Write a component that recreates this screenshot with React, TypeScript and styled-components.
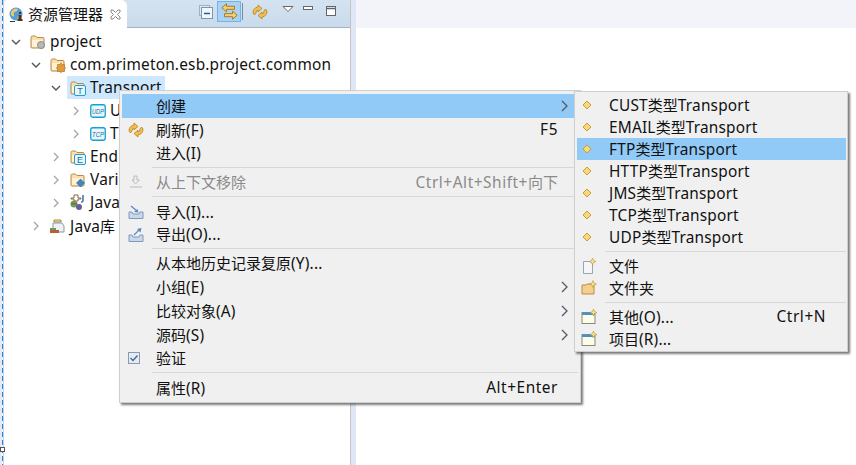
import React from "react";
import styled, { createGlobalStyle } from "styled-components";

const Global = createGlobalStyle`
  html, body { margin: 0; padding: 0; background: #fff; }
  body { font-family: "Noto Sans", "Noto Sans CJK SC", sans-serif; font-size: 15px; color: #111; overflow: hidden; }
`;

const Page = styled.div`
  position: relative; display: flex; width: 856px; height: 465px; overflow: hidden; background: #fff;
`;
const Rail = styled.div`
  position: relative; width: 4px; flex: none;
  background:
    linear-gradient(#e3e9f5, #e3e9f5) 0 0 / 2px 100% no-repeat,
    repeating-linear-gradient(#1b87e8 0 5px, #fff 5px 8px) 2px 0 / 1px 100% no-repeat,
    linear-gradient(#c9cfd8, #c9cfd8) 3px 0 / 1px 100% no-repeat;
`;
const Handle = styled.i`
  position: absolute; left: 0; top: 447px; width: 3px; height: 3px; border: 1px solid #555; background: #fff;
`;
const Panel = styled.section`
  width: 346px; flex: none; display: flex; flex-direction: column; border-right: 1px solid #c4c4c4;
`;
const TabBar = styled.header`
  height: 27px; flex: none; display: flex; align-items: flex-start;
  background: linear-gradient(#d5e3f0, #c8dbec); border-bottom: 1px solid #a9b3bf;
`;
const Tab = styled.div`
  width: 123px; height: 28px; flex: none; display: flex; align-items: center; padding-left: 5px; box-sizing: border-box;
  background: #fff; border-radius: 3px 6px 0 0; color: #111;
`;
const TabTitle = styled.span`margin-left: 3px; padding-bottom: 2px; width: 82px; flex: none;`;
const Tools = styled.div`
  margin-left: 72px; display: flex; align-items: flex-start; height: 27px;
`;
const ToolBtn = styled.div<{ $w: number; $h: number; $ml?: number; $mt: number; $active?: boolean }>`
  width: ${(p) => p.$w}px; height: ${(p) => p.$h}px; margin: ${(p) => p.$mt}px 0 0 ${(p) => p.$ml ?? 0}px;
  flex: none; display: flex; align-items: center; justify-content: center; box-sizing: border-box;
  ${(p) => p.$active && "background: #a9d2f5; border: 1px solid #74b3ea;"}
`;
const ToolSep = styled.div`width: 1px; height: 17px; margin: 3px 8px 0 1px; background: #7e8a96; flex: none;`;
const Tree = styled.ul`list-style: none; margin: 2px 0 0; padding: 0; display: flex; flex-direction: column;`;
const Row = styled.li<{ $level: number; $h?: number }>`
  height: ${(p) => p.$h ?? 23}px; display: flex; align-items: center; padding-left: ${(p) => 7 + p.$level * 20}px; white-space: nowrap;
`;
const Twist = styled.span`width: 10px; height: 10px; flex: none; margin-right: 6px; display: flex;`;
const Label = styled.span<{ $selected?: boolean }>`
  display: flex; align-items: center; height: 23px; padding: 0 3px; gap: 4px; color: #111;
  ${(p) => p.$selected && "background: #cde8ff;"}
`;
const LabelText = styled.span`padding-bottom: 1px;`;
const Latin = styled.span`font-size: 15.4px; letter-spacing: 0.2px;`;
const Sash = styled.div`width: 5px; flex: none; background: #dfe6f6;`;
const Editor = styled.main`flex: 1; display: flex; flex-direction: column;`;
const EditorTabs = styled.div`height: 28px; background: #f3f4fa;`;

const Menu = styled.div<{ $left: number; $top: number; $w: number; $h: number; $pt: number; $pr: number }>`
  position: absolute; left: ${(p) => p.$left}px; top: ${(p) => p.$top}px; width: ${(p) => p.$w}px; height: ${(p) => p.$h}px;
  box-sizing: border-box; background: #f0f0f0; border: 1px solid #cfcfcf;
  padding: ${(p) => p.$pt}px ${(p) => p.$pr}px 0 2px;
  box-shadow: 2px 2px 2px rgba(70,70,70,.7);
`;
const Item = styled.div<{ $h?: number; $hot?: boolean; $off?: boolean }>`
  height: ${(p) => p.$h ?? 22}px; display: flex; align-items: center; white-space: nowrap;
  color: ${(p) => (p.$off ? "#8a8a8a" : "#111")};
  ${(p) => p.$hot && "background: #91c9f7;"}
`;
const Slot = styled.span<{ $w: number }>`
  width: ${(p) => p.$w}px; flex: none; display: flex; align-items: center; padding-left: ${(p) => (p.$w > 33 ? 6 : 4)}px; box-sizing: border-box;
`;
const Text = styled.span`flex: 1; padding-bottom: 1px;`;
const Keys = styled.span`
  flex: none; padding-bottom: 1px;
  ${Latin} { letter-spacing: 0.55px; }
`;
const ArrowSlot = styled.span<{ $w: number }>`width: ${(p) => p.$w}px; flex: none; display: flex; padding-left: 3px; box-sizing: border-box;`;
const Sep = styled.div<{ $ml: number; $mr: number; $h?: number }>`
  height: ${(p) => p.$h ?? 7}px; display: flex; align-items: center; margin: 0 ${(p) => p.$mr}px 0 ${(p) => p.$ml}px;
  &::before { content: ""; flex: 1; height: 1px; background: #d7d7d7; }
`;

/* Latin runs sit slightly larger than the CJK runs, as in the source UI font. */
const Mixed = ({ t }: { t: string }) => (
  <>
    {t.split(/([\u0000-\u024f]+)/).filter(Boolean).map((part, i) =>
      /^[\u0000-\u024f]/.test(part) ? <Latin key={i}>{part}</Latin> : <span key={i}>{part}</span>
    )}
  </>
);

/* ---------- icons ---------- */
const Down = () => (
  <svg width="10" height="10" viewBox="0 0 10 10"><path d="M1 3l4 4 4-4" fill="none" stroke="#555" strokeWidth="1.4" /></svg>
);
const Right = () => (
  <svg width="10" height="10" viewBox="0 0 10 10"><path d="M3 1l4 4-4 4" fill="none" stroke="#a8a8a8" strokeWidth="1.4" /></svg>
);
const SubArrow = () => (
  <svg width="8" height="12" viewBox="0 0 8 12"><path d="M1 1l5 5-5 5" fill="none" stroke="#505a66" strokeWidth="1.3" /></svg>
);
const Folder = ({ children }: { children?: React.ReactNode }) => (
  <svg width="16" height="16" viewBox="0 0 16 16">
    <path d="M1 4.500V13q0 1 1 1h11q1 0 1-1V4.500q0-1-1-1H7L5.500 2H2.500Q1 2 1 3.500z" fill="#fbdfa6" stroke="#b38a4e" />
    <path d="M2 6h11v7H2z" fill="#fff2d2" />
    {children}
  </svg>
);
const Globe = () => (
  <svg width="16" height="17" viewBox="0 0 16 17">
    <circle cx="7" cy="8" r="6.500" fill="#4f9fdd" />
    <path d="M2 6q3-5 7-3-1 3-3 3t-1 3-3 0zM9 10q3-2 4-1-1 4-5 5z" fill="#f3c765" />
    <path d="M1 15h5v1H1zM10 6h2v2h-2zM9.500 9h3v4h1v2h-5v-2h1z" fill="#4e3318" />
  </svg>
);
const CloseX = () => (
  <svg width="11" height="11" viewBox="0 0 11 11">
    <path d="M1 1h2l2.500 2.500L8 1h2v2L7.500 5.500 10 8v2H8L5.500 7.500 3 10H1V8l2.500-2.500L1 3z" fill="#fff" stroke="#8a8a8a" />
  </svg>
);
const CollapseAll = () => (
  <svg width="14" height="14" viewBox="0 0 14 14">
    <rect x=".5" y=".5" width="10" height="10" fill="#dfe9f4" stroke="#9fb3c8" />
    <rect x="2.500" y="2.500" width="11" height="11" fill="#f3f7fb" stroke="#7d96ae" />
    <path d="M5 8.500h6" stroke="#1f5c9a" strokeWidth="1.500" />
  </svg>
);
const LinkArrows = () => (
  <svg width="17" height="17" viewBox="0 0 17 17">
    <path d="M.8 4.800L5.500.8v2.500h8v3h-8v2.500z" fill="#f6cf70" stroke="#a97a1f" />
    <path d="M16.200 12.200L11.500 8.200v2.500h-8v3h8v2.500z" fill="#f6cf70" stroke="#a97a1f" />
  </svg>
);
const Sync = ({ s = 16 }: { s?: number }) => (
  <svg width={s} height={s} viewBox="0 0 16 16">
    <path d="M1 9q0-5 5-6V1l4 3.500L6 8V6Q4 6 4 9l-1.500 2z" fill="#f4bf4f" stroke="#b5811f" strokeWidth=".8" />
    <path d="M15 7q0 5-5 6v2L6 11.500 10 8v2q2 0 2-3l1.500-2z" fill="#f4bf4f" stroke="#b5811f" strokeWidth=".8" />
  </svg>
);
const ViewMenu = () => (
  <svg width="12" height="6" viewBox="0 0 12 6"><path d="M1 .5h10L6 5.500z" fill="#fff" stroke="#6a6a6a" /></svg>
);
const Minimize = () => (
  <svg width="10" height="4" viewBox="0 0 10 4"><rect x=".5" y=".5" width="9" height="3" fill="#fff" stroke="#5f6870" /></svg>
);
const Maximize = () => (
  <svg width="10" height="10" viewBox="0 0 10 10">
    <rect x=".5" y=".5" width="9" height="9" fill="#fff" stroke="#5f6870" />
    <path d="M.5 2.500h9" stroke="#5f6870" strokeWidth="1.500" />
  </svg>
);
const Badge = ({ t }: { t: string }) => (
  <svg width="16" height="16" viewBox="0 0 16 16">
    <rect x=".75" y="1.750" width="14.500" height="12.500" rx="2" fill="#e8f6fd" stroke="#15a0d8" strokeWidth="1.300" />
    <text x="8" y="11" textAnchor="middle" fontFamily="Liberation Sans, sans-serif" fontSize="7.500" fill="#1d6f98" fontStyle="italic" textLength="12" lengthAdjust="spacingAndGlyphs">{t}</text>
  </svg>
);
const Letter = ({ t }: { t: string }) => (
  <>
    <rect x="4.500" y="5.500" width="11" height="10" rx="1.500" fill="#e7f6fc" stroke="#1aa0d5" />
    <text x="10" y="14" textAnchor="middle" fontFamily="Liberation Sans, sans-serif" fontSize="9" fill="#2a6c92">{t}</text>
  </>
);
const JavaIcon = () => (
  <svg width="16" height="17" viewBox="0 0 16 17">
    <path d="M4 1h4v3h3v1H8v2H4V5H1V4h3z" fill="none" stroke="#8a6a4a" />
    <path d="M13 1v6q0 1-2 1" fill="none" stroke="#3a6ea8" strokeWidth="1.500" />
    <circle cx="4" cy="10" r="3.500" fill="#5ba85b" />
    <rect x="1" y="9" width="6" height="1.500" fill="#c74a3a" />
    <circle cx="9" cy="13" r="3" fill="#6a5aa0" />
  </svg>
);
const LibIcon = () => (
  <svg width="16" height="16" viewBox="0 0 16 16">
    <path d="M4 2h7v2H4z" fill="#f7e5a8" stroke="#a98a40" />
    <path d="M3 5h9l2 3v6H3z" fill="#eef2f6" stroke="#8b98a6" />
    <path d="M0 12h9v3H0z" fill="#c25b34" />
    <path d="M0 10h6v2H0z" fill="#5aa35a" />
  </svg>
);
const Diamond = () => (
  <svg width="12" height="12" viewBox="0 0 12 12"><path d="M6 2L10 6 6 10 2 6z" fill="#fbd970" stroke="#c99a45" /></svg>
);
const Spark = ({ x, y }: { x: number; y: number }) => (
  <path transform={`translate(${x} ${y})`} d="M0-3.500L1-1 3.500 0 1 1 0 3.500-1 1-3.500 0-1-1z" fill="#fbe08a" stroke="#b79333" strokeWidth=".6" />
);
const NewFile = () => (
  <svg width="16" height="17" viewBox="0 0 16 17">
    <path d="M2.500 3.500h7l2 2v10h-9z" fill="#f4f6fa" stroke="#9aa6b4" />
    <Spark x={11.500} y={3.500} />
  </svg>
);
const NewFolder = () => (
  <svg width="16" height="16" viewBox="0 0 16 16">
    <path d="M1 5h4l1-1h7v10H1z" fill="#f5cf8c" stroke="#b68c4b" />
    <Spark x={12} y={4} />
  </svg>
);
const NewWin = () => (
  <svg width="16" height="16" viewBox="0 0 16 16">
    <rect x="1" y="3.500" width="13" height="11" fill="#fdfbe9" stroke="#8a8a70" />
    <rect x="1" y="3.500" width="13" height="2.500" fill="#4a8fd0" />
    <Spark x={12.500} y={3.500} />
  </svg>
);
const RemoveCtx = () => (
  <svg width="16" height="16" viewBox="0 0 16 16">
    <path d="M6 2h3v4h2.500L7.500 10 4 6h2z" fill="#eee" stroke="#bbb" />
    <path d="M2 13h12" stroke="#bbb" />
  </svg>
);
const ImportIc = () => (
  <svg width="16" height="16" viewBox="0 0 16 16">
    <path d="M1 8v6.500h14V8h-3l-1 2H5L4 8z" fill="#c9d9ea" stroke="#7e9abb" />
    <path d="M3 2l6 5" stroke="#5b8bc4" strokeWidth="1.300" /><path d="M10.500 8.500L6 8l3.500-3z" fill="#5b8bc4" />
  </svg>
);
const ExportIc = () => (
  <svg width="16" height="16" viewBox="0 0 16 16">
    <path d="M1 8v6.500h14V8h-3l-1 2H5L4 8z" fill="#c9d9ea" stroke="#7e9abb" />
    <path d="M6 8l6-6" stroke="#5b8bc4" strokeWidth="1.300" /><path d="M13.500 1L9 2l3.500 3.500z" fill="#5b8bc4" />
  </svg>
);
const Check = () => (
  <svg width="12" height="12" viewBox="0 0 12 12">
    <rect x=".5" y=".5" width="11" height="11" fill="#e3ebf5" stroke="#8a9bb0" />
    <path d="M2.500 6l2.500 2.500 4.500-5" fill="none" stroke="#4a6a8c" strokeWidth="1.400" />
  </svg>
);

type TreeNode = { level: number; open?: boolean; icon: React.ReactNode; text: string; selected?: boolean; h?: number };
const nodes: TreeNode[] = [
  { level: 0, open: true, text: "project", icon: <Folder><circle cx="11" cy="11" r="3.500" fill="#b9b9b9" stroke="#8c8c8c" /></Folder> },
  { level: 1, open: true, text: "com.primeton.esb.project.common", icon: <Folder><path d="M11 6l1.500 1.500 2 0 0 2 1 1.500-1 1.500 0 2-2 0-1.500 1-1.500-1-2 0 0-2-1-1.500 1-1.500 0-2 2 0z" fill="#e09a3a" stroke="#a86c1c" strokeWidth=".6" /></Folder> },
  { level: 2, open: true, text: "Transport", selected: true, icon: <Folder><Letter t="T" /></Folder> },
  { level: 3, text: "UDP", icon: <Badge t="UDP" /> },
  { level: 3, text: "TCP", icon: <Badge t="TCP" /> },
  { level: 2, text: "Endpoint", h: 24, icon: <Folder><Letter t="E" /></Folder> },
  { level: 2, text: "Variable", h: 22, icon: <Folder><path d="M10.500 7l4 4-4 4-4-4z" fill="#3f86c9" stroke="#2a5f96" strokeWidth=".6" /></Folder> },
  { level: 2, text: "Java", icon: <JavaIcon /> },
  { level: 1, text: "Java库", h: 24, icon: <LibIcon /> },
];

type MenuEntry =
  | { sep: true; h?: number }
  | { sep?: false; text: string; h?: number; icon?: React.ReactNode; keys?: string; sub?: boolean; hot?: boolean; off?: boolean };

const mainMenu: MenuEntry[] = [
  { text: "创建", h: 24, sub: true, hot: true },
  { text: "刷新(F)", h: 24, keys: "F5", icon: <Sync /> },
  { text: "进入(I)", h: 22 },
  { sep: true },
  { text: "从上下文移除", off: true, keys: "Ctrl+Alt+Shift+向下", icon: <RemoveCtx /> },
  { sep: true },
  { text: "导入(I)...", h: 24, icon: <ImportIc /> },
  { text: "导出(O)...", h: 21, icon: <ExportIc /> },
  { sep: true, h: 6 },
  { text: "从本地历史记录复原(Y)...", h: 24 },
  { text: "小组(E)", h: 24, sub: true },
  { text: "比较对象(A)", h: 24, sub: true },
  { text: "源码(S)", h: 24, sub: true },
  { text: "验证", h: 22, icon: <Check /> },
  { sep: true },
  { text: "属性(R)", h: 24, keys: "Alt+Enter" },
];

const subMenu: MenuEntry[] = [
  { text: "CUST类型Transport", icon: <Diamond /> },
  { text: "EMAIL类型Transport", icon: <Diamond /> },
  { text: "FTP类型Transport", icon: <Diamond />, hot: true },
  { text: "HTTP类型Transport", icon: <Diamond /> },
  { text: "JMS类型Transport", icon: <Diamond /> },
  { text: "TCP类型Transport", icon: <Diamond /> },
  { text: "UDP类型Transport", icon: <Diamond /> },
  { sep: true },
  { text: "文件", icon: <NewFile /> },
  { text: "文件夹", icon: <NewFolder /> },
  { sep: true },
  { text: "其他(O)...", keys: "Ctrl+N", icon: <NewWin /> },
  { text: "项目(R)...", icon: <NewWin /> },
];

const Entries = ({ items, slot, sepL, sepR, tail }: { items: MenuEntry[]; slot: number; sepL: number; sepR: number; tail: number }) => (
  <>
    {items.map((it, i) =>
      it.sep ? (
        <Sep key={i} $ml={sepL} $mr={sepR} $h={it.h} />
      ) : (
        <Item key={i} $h={it.h} $hot={it.hot} $off={it.off}>
          <Slot $w={slot}>{it.icon}</Slot>
          <Text><Mixed t={it.text} /></Text>
          {it.keys && <Keys><Mixed t={it.keys} /></Keys>}
          <ArrowSlot $w={tail}>{it.sub && <SubArrow />}</ArrowSlot>
        </Item>
      )
    )}
  </>
);

export default function App() {
  return (
    <Page>
      <Global />
      <Rail><Handle /></Rail>
      <Panel>
        <TabBar>
          <Tab>
            <Globe />
            <TabTitle>资源管理器</TabTitle>
            <CloseX />
          </Tab>
          <Tools>
            <ToolBtn $w={14} $h={14} $mt={5}><CollapseAll /></ToolBtn>
            <ToolBtn $w={24} $h={21} $mt={1} $ml={4} $active><LinkArrows /></ToolBtn>
            <ToolSep />
            <ToolBtn $w={17} $h={16} $mt={4}><Sync s={16} /></ToolBtn>
            <ToolBtn $w={12} $h={6} $mt={6} $ml={14}><ViewMenu /></ToolBtn>
            <ToolBtn $w={10} $h={4} $mt={6} $ml={9}><Minimize /></ToolBtn>
            <ToolBtn $w={10} $h={10} $mt={6} $ml={13}><Maximize /></ToolBtn>
          </Tools>
        </TabBar>
        <Tree>
          {nodes.map((n) => (
            <Row key={n.text} $level={n.level} $h={n.h}>
              <Twist>{n.open ? <Down /> : <Right />}</Twist>
              <Label $selected={n.selected}>{n.icon}<LabelText><Mixed t={n.text} /></LabelText></Label>
            </Row>
          ))}
        </Tree>
      </Panel>
      <Sash />
      <Editor><EditorTabs /></Editor>
      <Menu $left={119} $top={90} $w={462} $h={313} $pt={3} $pr={2}>
        <Entries items={mainMenu} slot={34} sepL={30} sepR={0} tail={20} />
      </Menu>
      <Menu $left={574} $top={91} $w={274} $h={261} $pt={2} $pr={1}>
        <Entries items={subMenu} slot={32} sepL={28} sepR={0} tail={20} />
      </Menu>
    </Page>
  );
}
